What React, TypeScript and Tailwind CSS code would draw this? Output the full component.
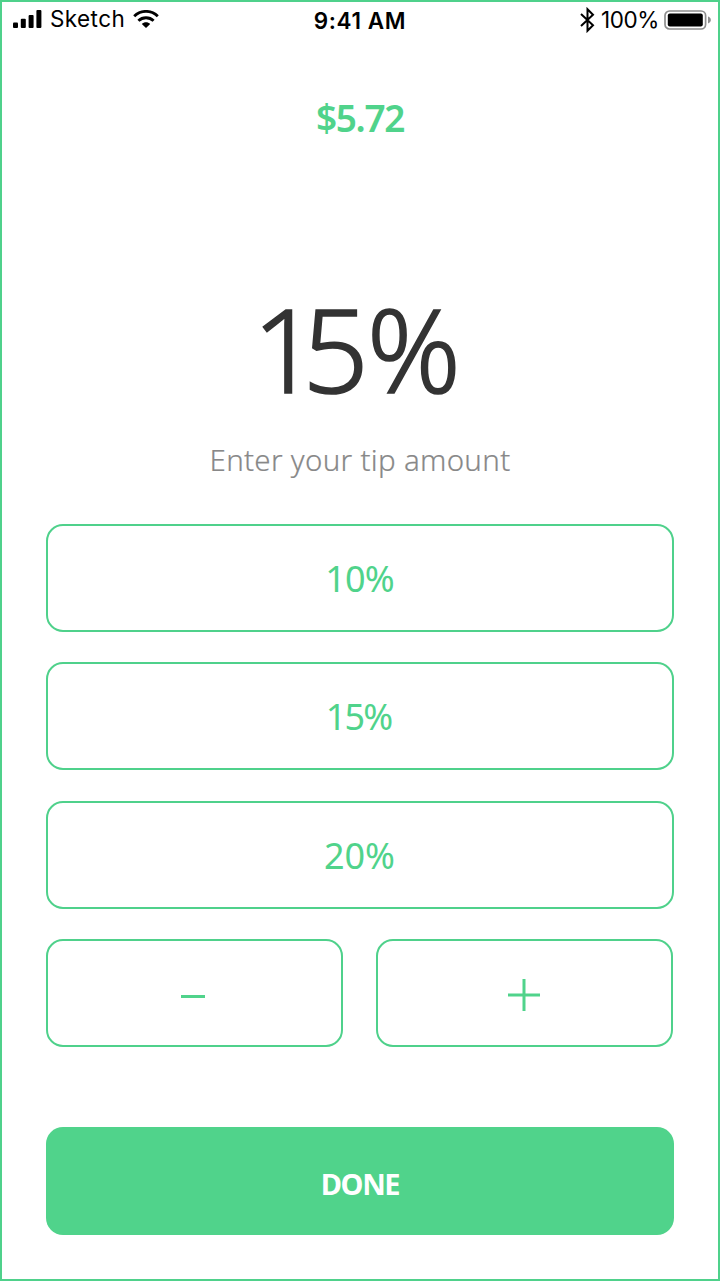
import React from "react";

const buttonBase =
  "flex h-[108px] items-center justify-center rounded-[17px] border-2 border-[#4fd18b] text-[#50d38b]";

function Signal() {
  return (
    <svg width="29" height="18" viewBox="0 0 29 18" fill="#000">
      <rect x="0" y="12.5" width="5" height="5.5" rx="1" />
      <rect x="7.8" y="8.8" width="5" height="9.2" rx="1" />
      <rect x="15.6" y="5" width="5" height="13" rx="1" />
      <rect x="23.4" y="0" width="5" height="18" rx="1" />
    </svg>
  );
}

function Wifi() {
  return (
    <svg width="26" height="18" viewBox="0 0 26 18" fill="none" stroke="#000" strokeWidth="2.9">
      <path d="M1.2 6.2C8 -0.2 18 -0.2 24.8 6.2" />
      <path d="M5.4 10.8C9.7 6.7 16.3 6.7 20.6 10.8" />
      <path d="M8.8 14C11 11.6 15 11.6 17.2 14L13 17.9Z" fill="#000" stroke="none" />
    </svg>
  );
}

function Bluetooth() {
  return (
    <svg width="15" height="26" viewBox="0 0 15 26" fill="none" stroke="#000" strokeWidth="2">
      <path d="M1 7L13 18.3L7.5 23.8V2.2L13 7.7L1 19" />
    </svg>
  );
}

function Battery() {
  return (
    <svg width="48" height="20" viewBox="0 0 48 20">
      <rect x="1" y="1" width="40.6" height="18" rx="4.5" fill="none" stroke="#8e8e8e" strokeWidth="1.7" />
      <rect x="3.8" y="3.6" width="35" height="12.8" rx="2" fill="#000" />
      <path d="M44 6.6C47.8 7.8 47.8 12.2 44 13.4Z" fill="#8e8e8e" />
    </svg>
  );
}

function TipOption({ children, tracking }: { children: string; tracking: string }) {
  return (
    <button className={`${buttonBase} w-full`}>
      <span className={`pt-[2px] text-[36px] leading-none ${tracking}`}>{children}</span>
    </button>
  );
}

export default function App() {
  return (
    <main className="flex h-[1281px] w-[720px] flex-col border-2 border-[#4fd18b] bg-white font-['Noto_Sans',sans-serif]">
      <header className="grid h-[36px] grid-cols-3 items-center pl-[11px] pr-[6px] font-['Inter',sans-serif] text-[22.5px] leading-none text-black">
        <div className="flex items-center pb-[2px]">
          <Signal />
          <span className="ml-[8px] tracking-[0.4px]">Sketch</span>
          <span className="ml-[8px]"><Wifi /></span>
        </div>
        <div className="pr-[5px] pt-[3px] text-center text-[22.5px] font-semibold tracking-[0.6px]">9:41 AM</div>
        <div className="flex items-center justify-end">
          <Bluetooth />
          <span className="ml-[6px] mr-[5px] text-[22.5px] tracking-[-0.4px]">100%</span>
          <Battery />
        </div>
      </header>
      <section className="flex h-[486px] flex-col items-center">
        <h2 className="mt-[61px] text-[37px] leading-[38px] font-semibold tracking-[-1.4px] text-[#50d38b]">$5.72</h2>
        <h1 className="mt-[151px] pr-[13px] text-[116px] leading-[120px] font-light text-[#333] [-webkit-text-stroke:1.6px_#333]">
          <span className="tracking-[-16px]">1</span>
          <span className="tracking-[-2px]">5</span>
          <span className="tracking-[-6px]">%</span>
        </h1>
        <p className="mt-[32px] text-[29.5px] leading-[40px] font-light tracking-[0.3px] text-[#888] [-webkit-text-stroke:0.2px_#888]">Enter your tip amount</p>
      </section>
      <section className="mx-[44px] flex flex-col gap-[30.3px]">
        <TipOption tracking="pr-[1px] tracking-[-0.8px]">10%</TipOption>
        <TipOption tracking="pr-[3px] tracking-[-1.8px]">15%</TipOption>
        <TipOption tracking="pr-[1px] tracking-[0px]">20%</TipOption>
        <div className="mr-[1px] grid grid-cols-2 gap-[33px]">
          <button className={buttonBase} aria-label="Decrease tip">
            <svg width="24" height="3" viewBox="0 0 24 3" className="mt-[7px] mr-[4px]"><path d="M0 1.5H24" stroke="#50d38b" strokeWidth="3" /></svg>
          </button>
          <button className={buttonBase} aria-label="Increase tip">
            <svg width="32" height="32" viewBox="0 0 32 32" className="mt-[4px] mr-[1px]"><path d="M0 16H32M16 0V32" stroke="#50d38b" strokeWidth="3" /></svg>
          </button>
        </div>
      </section>
      <button className="mx-[44px] mt-[80.5px] flex h-[108px] items-center justify-center rounded-[17px] bg-[#50d38b] pt-[4px] text-[29px] font-bold tracking-[-1.4px] text-white">
        DONE
      </button>
    </main>
  );
}
